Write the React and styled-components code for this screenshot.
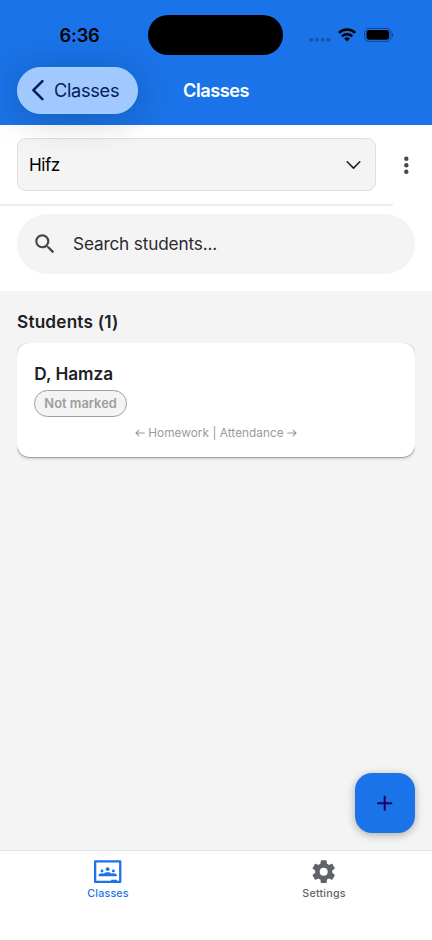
import React from "react";
import styled, { createGlobalStyle } from "styled-components";

const GlobalStyle = createGlobalStyle`
  *, *::before, *::after { box-sizing: border-box; }
  body { margin: 0; background: #f4f4f4; font-family: Inter, "Liberation Sans", sans-serif; }
  button { font: inherit; border: 0; padding: 0; margin: 0; background: none; }
  svg { display: block; flex: none; }
`;

const Screen = styled.div`
  display: flex;
  flex-direction: column;
  width: 432px;
  height: 940px;
  overflow: hidden;
  background: #f4f4f4;
  color: #202124;
`;

const Header = styled.header`
  position: relative;
  z-index: 1;
  flex: none;
  height: 124.7px;
  background: #1a73e8;
`;

const StatusBar = styled.div`
  display: grid;
  grid-template-columns: 148.4px 135px 1fr;
  align-items: center;
  height: 55px;
  padding-top: 15px;
`;

const Clock = styled.span`
  padding-left: 59.5px;
  font-size: 18.2px;
  font-weight: 600;
  line-height: 22px;
  letter-spacing: -0.15px;
  color: #000;
`;

const Island = styled.div`
  height: 39.5px;
  border-radius: 20px;
  background: #000;
`;

const StatusIcons = styled.div`
  display: flex;
  align-items: center;
  padding-left: 26px;
`;

const NavBar = styled.div`
  display: grid;
  grid-template-columns: 1fr auto 1fr;
  align-items: center;
  padding: 12px 17px 0;
`;

const BackButton = styled.button`
  display: flex;
  align-items: center;
  gap: 10.5px;
  width: 121px;
  height: 47px;
  padding: 0 0 1px 13.5px;
  border: 1px solid #a0d2ff;
  border-radius: 24px;
  background: #a1c8ff;
  box-shadow: 0 4px 36px rgba(0, 0, 0, 0.22);
  color: #041e56;
  font-size: 18.2px;
  line-height: 24px;
  letter-spacing: -0.3px;
`;

const Title = styled.h1`
  margin: 0 0 1px;
  font-size: 18.2px;
  font-weight: 600;
  line-height: 24px;
  letter-spacing: -0.5px;
  color: #fff;
`;

const Filters = styled.section`
  flex: none;
  height: 166.5px;
  background: #fff;
`;

const ClassRow = styled.div`
  display: flex;
  align-items: center;
`;

const ClassPicker = styled.div`
  width: 393px;
  height: 81px;
  padding: 13px 17px 0;
  border-bottom: 2px solid #ececec;
`;

const Select = styled.button`
  display: flex;
  align-items: center;
  justify-content: space-between;
  width: 359px;
  height: 53.5px;
  padding: 0 14px 0 11px;
  border: 1px solid #dedede;
  border-radius: 8.5px;
  background: #f4f4f4;
  color: #000;
  font-size: 17.2px;
  letter-spacing: -0.5px;

  svg { margin-top: 1px; }
`;

const MenuButton = styled.button`
  width: 26px;
  height: 26px;
`;

const SearchField = styled.label`
  display: flex;
  align-items: center;
  gap: 15px;
  height: 60px;
  margin: 8px 17px 0;
  padding-left: 15px;
  border-radius: 30px;
  background: #f4f4f4;
  color: #2b2a2f;
  font-size: 17.2px;
  line-height: 22px;
  letter-spacing: -0.15px;

  span { margin-top: 1px; }
`;

const Content = styled.main`
  flex: 1;
  min-height: 0;
  padding: 18.8px 17px 0;
`;

const SectionTitle = styled.h2`
  margin: 0 0 9px;
  font-size: 17.2px;
  font-weight: 600;
  line-height: 24px;
  letter-spacing: 0.2px;
`;

const CardFrame = styled.div`
  clip-path: inset(0 0 -12px 0);
`;

const Card = styled.article`
  height: 114px;
  padding: 19px 17.3px 0;
  border-radius: 13px;
  background: #fff;
  box-shadow: 0 1px 1px rgba(0, 0, 0, 0.24), 0 1px 4px rgba(0, 0, 0, 0.24);
`;

const StudentName = styled.h3`
  margin: 0 0 4.3px;
  font-size: 17.2px;
  font-weight: 600;
  line-height: 24px;
  letter-spacing: 0;
`;

const StatusChip = styled.span`
  display: flex;
  align-items: center;
  justify-content: center;
  width: 92.6px;
  height: 26.4px;
  border: 1px solid #9e9e9e;
  border-radius: 14px;
  background: #f4f4f4;
  color: #9e9e9e;
  font-size: 12.9px;
  font-weight: 600;
`;

const SwipeHint = styled.p`
  display: flex;
  align-items: center;
  justify-content: center;
  gap: 3px;
  margin: 8px 0 0;
  color: #9a9a9a;
  font-size: 11.8px;
  line-height: 17px;
  letter-spacing: 0.05px;

  svg { margin-bottom: 1px; }
`;

const AddButton = styled.button`
  position: fixed;
  left: 354.5px;
  top: 773px;
  display: grid;
  place-items: center;
  width: 60.3px;
  height: 60.3px;
  border-radius: 17px;
  background: #1a73e8;
  box-shadow: 0 2px 9px rgba(0, 0, 0, 0.3);
`;

const TabBar = styled.nav`
  display: grid;
  grid-template-columns: 1fr 1fr;
  flex: none;
  height: 90px;
  border-top: 1px solid #e3e3e3;
  background: #fff;
`;

const Tab = styled.button`
  display: flex;
  flex-direction: column;
  align-items: center;
  padding-top: 6.8px;
  color: ${({ $active }) => ($active ? "#1a73e8" : "#5f6368")};
  font-size: 10.7px;
  font-weight: 550;
  line-height: 14px;
  letter-spacing: 0.22px;

  svg { margin-bottom: 1.6px; }
`;

const classroomPath = "M23,2H1A1,1 0 0,0 0,3V21A1,1 0 0,0 1,22H23A1,1 0 0,0 24,21V3A1,1 0 0,0 23,2M22,20H20V19H15V20H2V4H22V20M10.29,9.71A1.71,1.71 0 0,1 12,8C12.95,8 13.71,8.77 13.71,9.71C13.71,10.66 12.95,11.43 12,11.43C11.05,11.43 10.29,10.66 10.29,9.71M5.71,11.29C5.71,10.58 6.29,10 7,10A1.29,1.29 0 0,1 8.29,11.29C8.29,12 7.71,12.57 7,12.57C6.29,12.57 5.71,12 5.71,11.29M15.71,11.29A1.29,1.29 0 0,1 17,10A1.29,1.29 0 0,1 18.29,11.29C18.29,12 17.71,12.57 17,12.57C16.29,12.57 15.71,12 15.71,11.29M20,15.14V16H16L14,16H10L8,16H4V15.14C4,14.2 5.55,13.43 7,13.43C7.55,13.43 8.11,13.54 8.6,13.73C9.35,13.04 10.7,12.57 12,12.57C13.3,12.57 14.65,13.04 15.4,13.73C15.89,13.54 16.45,13.43 17,13.43C18.45,13.43 20,14.2 20,15.14Z";
const cogPath = "M12,15.5A3.5,3.5 0 0,1 8.5,12A3.5,3.5 0 0,1 12,8.5A3.5,3.5 0 0,1 15.5,12A3.5,3.5 0 0,1 12,15.5M19.43,12.97C19.47,12.65 19.5,12.33 19.5,12C19.5,11.67 19.47,11.34 19.43,11L21.54,9.37C21.73,9.22 21.78,8.95 21.66,8.73L19.66,5.27C19.54,5.05 19.27,4.96 19.05,5.05L16.56,6.05C16.04,5.66 15.5,5.32 14.87,5.07L14.5,2.42C14.46,2.18 14.25,2 14,2H10C9.75,2 9.54,2.18 9.5,2.42L9.13,5.07C8.5,5.32 7.96,5.66 7.44,6.05L4.95,5.05C4.73,4.96 4.46,5.05 4.34,5.27L2.34,8.73C2.21,8.95 2.27,9.22 2.46,9.37L4.57,11C4.53,11.34 4.5,11.67 4.5,12C4.5,12.33 4.53,12.65 4.57,12.97L2.46,14.63C2.27,14.78 2.21,15.05 2.34,15.27L4.34,18.73C4.46,18.95 4.73,19.03 4.95,18.95L7.44,17.94C7.96,18.34 8.5,18.68 9.13,18.93L9.5,21.58C9.54,21.82 9.75,22 10,22H14C14.25,22 14.46,21.82 14.5,21.58L14.87,18.93C15.5,18.67 16.04,18.34 16.56,17.94L19.05,18.95C19.27,19.03 19.54,18.95 19.66,18.73L21.66,15.27C21.78,15.05 21.73,14.78 21.54,14.63L19.43,12.97Z";
const magnifyPath = "M9.5,3A6.5,6.5 0 0,1 16,9.5C16,11.11 15.41,12.59 14.44,13.73L14.71,14H15.5L20.5,19L19,20.5L14,15.5V14.71L13.73,14.44C12.59,15.41 11.11,16 9.5,16A6.5,6.5 0 0,1 3,9.5A6.5,6.5 0 0,1 9.5,3M9.5,5C7,5 5,7 5,9.5C5,12 7,14 9.5,14C12,14 14,12 14,9.5C14,7 12,5 9.5,5Z";

const GlyphIcon = ({ d, size, color = "currentColor" }) => (
  <svg width={size} height={size} viewBox="0 0 24 24" fill={color}>
    <path d={d} />
  </svg>
);

const SystemIcons = () => (
  <svg width="86" height="20" viewBox="0 0 86 20">
    <g fill="#000" opacity="0.25">
      <circle cx="2.3" cy="14.8" r="2" />
      <circle cx="8" cy="14.8" r="2" />
      <circle cx="13.7" cy="14.8" r="2" />
      <circle cx="19.4" cy="14.8" r="2" />
    </g>
    <g fill="none" stroke="#000" strokeWidth="2.5">
      <path d="M30 7.9a11.4 11.4 0 0 1 16.2 0" />
      <path d="M33 11.3a7.2 7.2 0 0 1 10.2 0" />
    </g>
    <path d="M35.3 13.6a4 4 0 0 1 5.6 0L38.1 16.5z" fill="#000" />
    <rect x="55.7" y="3.4" width="26.2" height="13" rx="4.2" fill="none" stroke="#000" strokeOpacity="0.4" />
    <rect x="57.5" y="5.1" width="22.6" height="9.6" rx="2.7" fill="#000" />
    <path d="M83 7.9c1.7.6 1.7 3.5 0 4.1z" fill="#000" opacity="0.45" />
  </svg>
);

const BackChevron = () => (
  <svg width="12" height="22" viewBox="0 0 12 22">
    <path d="M10.4 2.2 1.4 11.2l9 9" fill="none" stroke="currentColor" strokeWidth="2.5" strokeLinecap="round" strokeLinejoin="round" />
  </svg>
);

const DownChevron = () => (
  <svg width="15" height="10" viewBox="0 0 15 10">
    <path d="m1.2 1.8 6.3 6.3 6.3-6.3" fill="none" stroke="#202124" strokeWidth="1.6" strokeLinecap="round" strokeLinejoin="round" />
  </svg>
);

const MoreIcon = () => (
  <svg width="26" height="26" viewBox="0 0 26 26" fill="#47464f">
    <circle cx="13.3" cy="6.7" r="2.2" />
    <circle cx="13.3" cy="13.2" r="2.2" />
    <circle cx="13.3" cy="19.7" r="2.2" />
  </svg>
);

const PlusIcon = () => (
  <svg width="16" height="16" viewBox="0 0 16 16">
    <path d="M7.7 .7v15M.2 8.2h15" stroke="#22005d" strokeWidth="2" />
  </svg>
);

const Arrow = ({ right }) => (
  <svg width="10" height="10" viewBox="0 0 10 10">
    <path
      d={right ? "M.7 5h8.3M6.2 2.2 9 5 6.2 7.8" : "M9.3 5H1M3.8 2.2 1 5l2.8 2.8"}
      fill="none"
      stroke="currentColor"
      strokeWidth="1.1"
      strokeLinecap="round"
      strokeLinejoin="round"
    />
  </svg>
);

export default function App() {
  return (
    <Screen>
      <GlobalStyle />
      <Header>
        <StatusBar>
          <Clock>6:36</Clock>
          <Island />
          <StatusIcons><SystemIcons /></StatusIcons>
        </StatusBar>
        <NavBar>
          <BackButton><BackChevron />Classes</BackButton>
          <Title>Classes</Title>
        </NavBar>
      </Header>
      <Filters>
        <ClassRow>
          <ClassPicker>
            <Select>Hifz<DownChevron /></Select>
          </ClassPicker>
          <MenuButton aria-label="More options"><MoreIcon /></MenuButton>
        </ClassRow>
        <SearchField>
          <GlyphIcon d={magnifyPath} size={26} color="#47464f" />
          <span>Search students...</span>
        </SearchField>
      </Filters>
      <Content>
        <SectionTitle>Students (1)</SectionTitle>
        <CardFrame>
          <Card>
            <StudentName>D, Hamza</StudentName>
            <StatusChip>Not marked</StatusChip>
            <SwipeHint><Arrow /><span>Homework | Attendance</span><Arrow right /></SwipeHint>
          </Card>
        </CardFrame>
      </Content>
      <AddButton aria-label="Add student"><PlusIcon /></AddButton>
      <TabBar>
        <Tab $active><GlyphIcon d={classroomPath} size={27.4} />Classes</Tab>
        <Tab><GlyphIcon d={cogPath} size={27.4} />Settings</Tab>
      </TabBar>
    </Screen>
  );
}
